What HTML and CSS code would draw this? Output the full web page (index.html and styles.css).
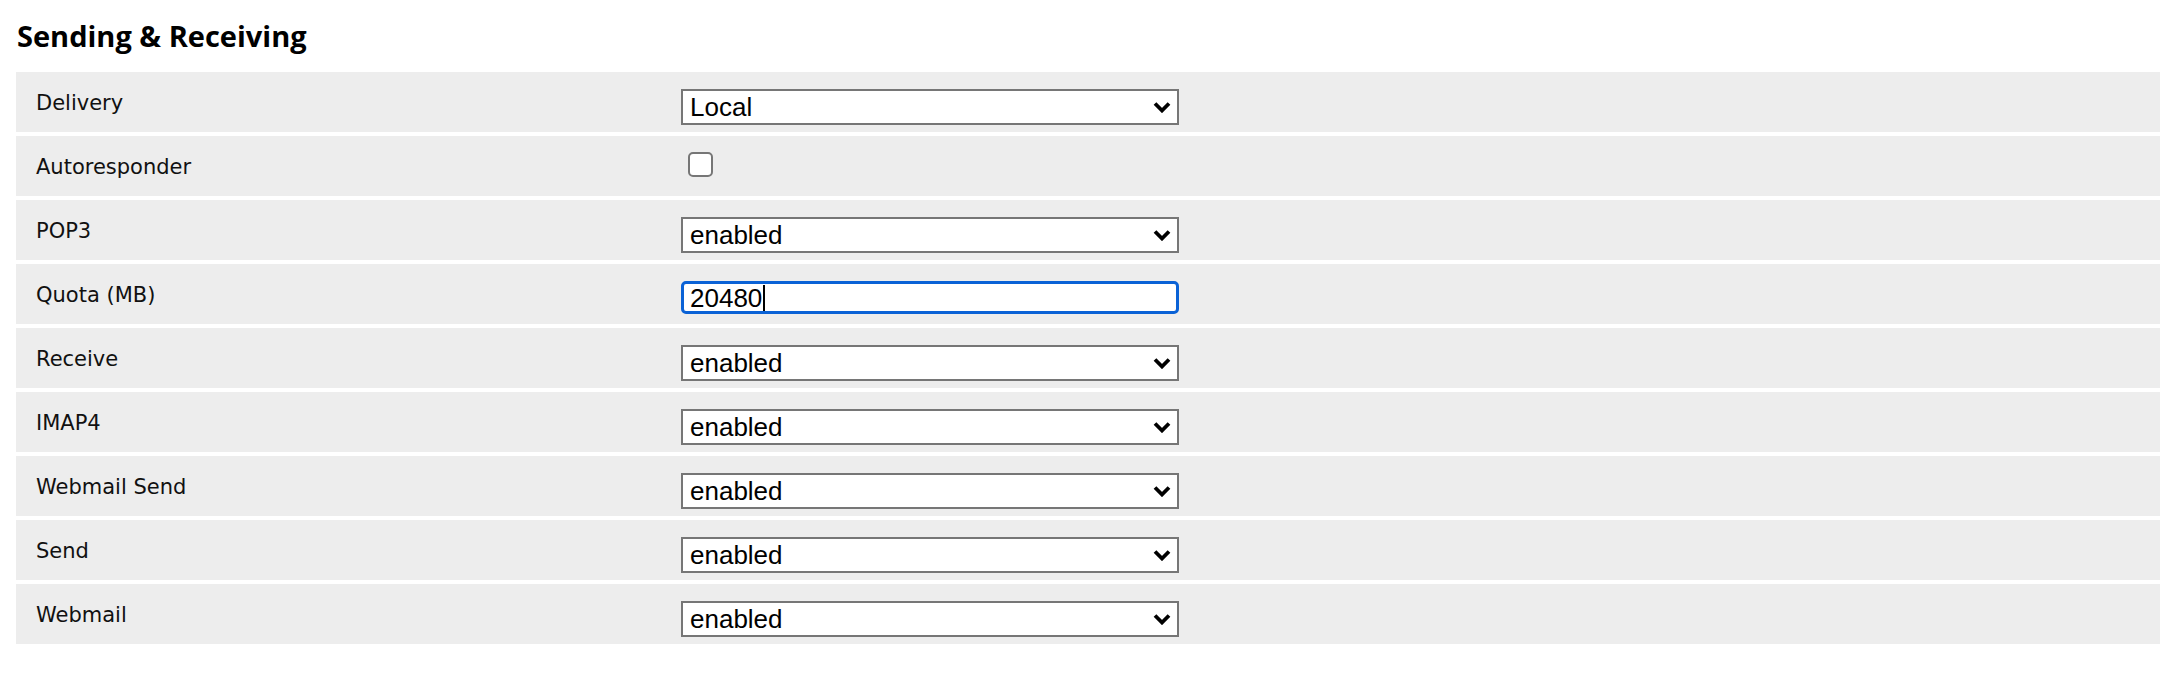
FILE: index.html
```html
<!DOCTYPE html>
<html lang="en">
<head>
<meta charset="utf-8">
<title>Sending &amp; Receiving</title>
<link rel="stylesheet" href="styles.css">
</head>
<body>
<div class="page">
  <h2 class="section-title">Sending &amp; Receiving</h2>
  <div class="settings">
    <div class="row">
      <div class="label">Delivery</div>
      <div class="control">
        <div class="select-wrap">
          <select class="select"><option>Local</option></select>
          <svg class="chev" viewBox="0 0 18 12" width="18" height="12"><path d="M2 2.5 L9 9.5 L16 2.5" fill="none" stroke="#000" stroke-width="3.8"/></svg>
        </div>
      </div>
    </div>
    <div class="row">
      <div class="label">Autoresponder</div>
      <div class="control control-check">
        <input class="check" type="checkbox">
      </div>
    </div>
    <div class="row">
      <div class="label">POP3</div>
      <div class="control">
        <div class="select-wrap">
          <select class="select"><option>enabled</option></select>
          <svg class="chev" viewBox="0 0 18 12" width="18" height="12"><path d="M2 2.5 L9 9.5 L16 2.5" fill="none" stroke="#000" stroke-width="3.8"/></svg>
        </div>
      </div>
    </div>
    <div class="row">
      <div class="label">Quota (MB)</div>
      <div class="control">
        <div class="text-field is-focused"><span class="tf-value">20480</span><span class="caret"></span></div>
      </div>
    </div>
    <div class="row">
      <div class="label">Receive</div>
      <div class="control">
        <div class="select-wrap">
          <select class="select"><option>enabled</option></select>
          <svg class="chev" viewBox="0 0 18 12" width="18" height="12"><path d="M2 2.5 L9 9.5 L16 2.5" fill="none" stroke="#000" stroke-width="3.8"/></svg>
        </div>
      </div>
    </div>
    <div class="row">
      <div class="label">IMAP4</div>
      <div class="control">
        <div class="select-wrap">
          <select class="select"><option>enabled</option></select>
          <svg class="chev" viewBox="0 0 18 12" width="18" height="12"><path d="M2 2.5 L9 9.5 L16 2.5" fill="none" stroke="#000" stroke-width="3.8"/></svg>
        </div>
      </div>
    </div>
    <div class="row">
      <div class="label">Webmail Send</div>
      <div class="control">
        <div class="select-wrap">
          <select class="select"><option>enabled</option></select>
          <svg class="chev" viewBox="0 0 18 12" width="18" height="12"><path d="M2 2.5 L9 9.5 L16 2.5" fill="none" stroke="#000" stroke-width="3.8"/></svg>
        </div>
      </div>
    </div>
    <div class="row">
      <div class="label">Send</div>
      <div class="control">
        <div class="select-wrap">
          <select class="select"><option>enabled</option></select>
          <svg class="chev" viewBox="0 0 18 12" width="18" height="12"><path d="M2 2.5 L9 9.5 L16 2.5" fill="none" stroke="#000" stroke-width="3.8"/></svg>
        </div>
      </div>
    </div>
    <div class="row">
      <div class="label">Webmail</div>
      <div class="control">
        <div class="select-wrap">
          <select class="select"><option>enabled</option></select>
          <svg class="chev" viewBox="0 0 18 12" width="18" height="12"><path d="M2 2.5 L9 9.5 L16 2.5" fill="none" stroke="#000" stroke-width="3.8"/></svg>
        </div>
      </div>
    </div>
  </div>
</div>
</body>
</html>
```
FILE: styles.css
```css
html, body {
  margin: 0;
  padding: 0;
  background: #ffffff;
}

.page {
  padding: 18px 18px 0 16px;
  font-family: "DejaVu Sans", Verdana, sans-serif;
  color: #111;
}

.section-title {
  margin: 0 0 18px 1px;
  font-family: "Open Sans", "DejaVu Sans", sans-serif;
  font-weight: 700;
  font-size: 29px;
  line-height: 36px;
  color: #000;
}

.settings {
  display: flex;
  flex-direction: column;
  gap: 4px;
}

.row {
  display: flex;
  height: 60px;
  background: #ededed;
}

.label {
  width: 665px;
  box-sizing: border-box;
  padding: 19px 0 0 20px;
  font-size: 21px;
  line-height: 25px;
  color: #111;
}

.control {
  padding-top: 17px;
}

.control-check {
  padding-top: 16px;
  padding-left: 7px;
}

.select-wrap {
  position: relative;
  width: 498px;
  height: 36px;
}

.select {
  appearance: none;
  -webkit-appearance: none;
  width: 498px;
  height: 36px;
  box-sizing: border-box;
  margin: 0;
  padding: 0 36px 0 7px;
  border: 2px solid #767676;
  border-radius: 0;
  background: #fff;
  font-family: "Liberation Sans", Arial, sans-serif;
  font-size: 26px;
  color: #000;
}

.chev {
  position: absolute;
  right: 8px;
  top: 12px;
  pointer-events: none;
}

.check {
  appearance: none;
  -webkit-appearance: none;
  display: block;
  margin: 0;
  width: 25px;
  height: 25px;
  box-sizing: border-box;
  border: 2px solid #767676;
  border-radius: 5px;
  background: #fff;
}

.text-field {
  display: flex;
  align-items: center;
  width: 498px;
  height: 33px;
  box-sizing: border-box;
  padding: 0 0 0 6px;
  border: 3px solid #0a62d6;
  border-radius: 5px;
  background: #fff;
  font-family: "Liberation Sans", Arial, sans-serif;
  font-size: 26px;
  line-height: 28px;
  color: #000;
}

.caret {
  display: inline-block;
  width: 2px;
  height: 26px;
  margin-left: 1px;
  background: #000;
}
```
